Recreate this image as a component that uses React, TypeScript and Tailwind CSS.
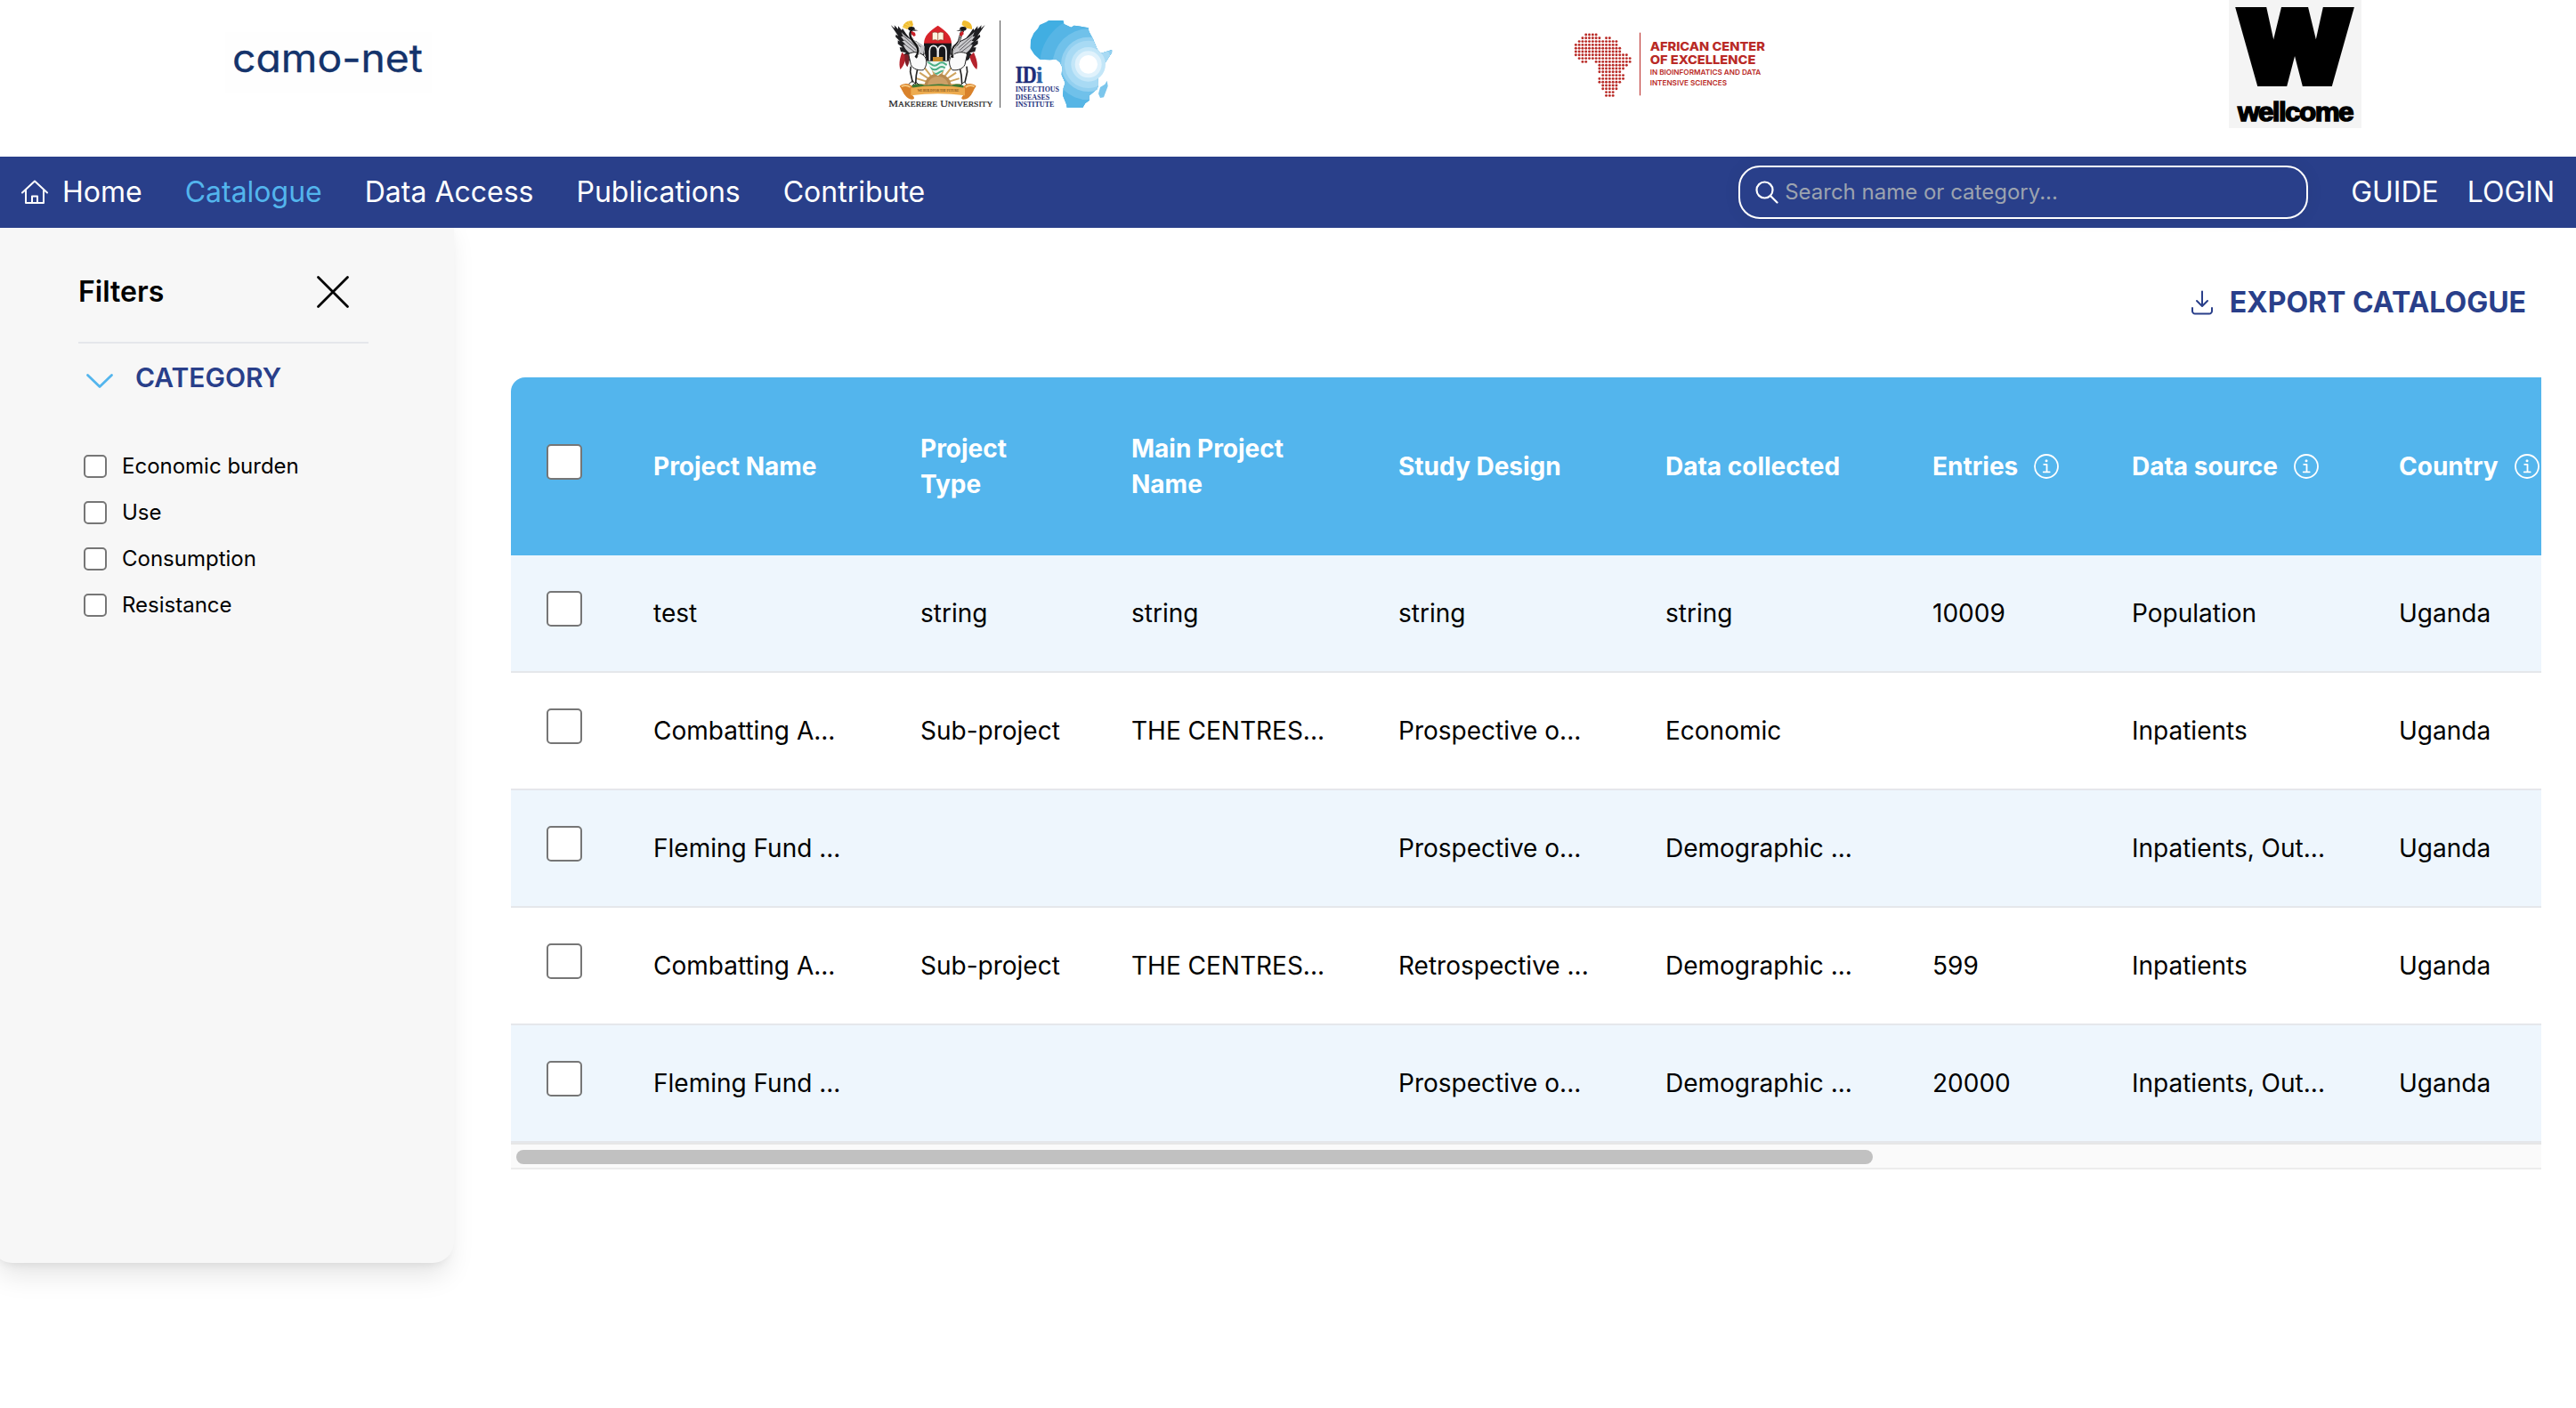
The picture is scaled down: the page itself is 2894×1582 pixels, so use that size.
import React from "react";

const FONT = "font-[Inter,'Liberation_Sans',sans-serif]";

/* ---------- logos ---------- */

function CamoNetLogo() {
  return (
    <svg className="mt-[36px] h-[68px] w-[232px] shrink-0" viewBox="0 0 232 68">
      <rect width="232" height="68" fill="#fefefe" />
      <text
        x="8"
        y="44.5"
        fontSize="43"
        fontWeight="400"
        fill="#14336b"
        stroke="#14336b"
        strokeWidth="0.3"
        textLength="214"
        lengthAdjust="spacingAndGlyphs"
        style={{ fontFamily: "Inter, sans-serif", fontFeatureSettings: '"cv11"' }}
      >
        camo-net
      </text>
    </svg>
  );
}

function Crane() {
  return (
    <g>
      <path d="M62 84l14 12-2-11 13 13 0-10 12 14 3-6 12 18 12 14 24 12 20 14 6 28-14 22-22 6-22-8-12-18 8-6-18-4-4-14 10 0-16-12 0-12 8 4-16-16 2-8 8 6z" fill="#1f1f22" />
      <path d="M98 108c14 16 34 30 54 34l24 14-4 26-24 6c-22-4-38-20-44-38l10 2-14-14 8 0-12-16 8 2z" fill="#c9c9cc" />
      <path d="M104 120l48 42M108 134l40 36M112 152l34 26M120 124l44 34" stroke="#5a5a5e" strokeWidth="3" fill="none" />
      <path d="M100 176c-6 16-12 36-6 58 10-8 18-28 20-44z" fill="#b5222c" />
      <path d="M110 182c-2 20 0 34 8 44 8-16 8-30 4-42z" fill="#7c1f28" />
      <path d="M122 182c16-10 40-8 56 10 8 16 4 34-6 44-16 2-34-2-42-18z" fill="#fafafa" stroke="#222" strokeWidth="3" />
      <path d="M134 102c-16 18 4 34 16 52 8 14 6 28-4 40" stroke="#161616" strokeWidth="9" fill="none" />
      <path d="M136 104c-12 20 8 32 19 50 6 14 5 24-2 36" stroke="#f5f5f5" strokeWidth="3" fill="none" />
      <path d="M102 92c4-14 14-22 32-22l4 14-8 12-14 2z" fill="#f0bc31" />
      <path d="M104 90l26 4M110 80l22 12M120 73l12 18" stroke="#fbe07a" strokeWidth="2" />
      <ellipse cx="132" cy="97" rx="11" ry="7" fill="#17171a" />
      <path d="M138 98l17 5-16 2z" fill="#444" />
      <path d="M130 104l14 6 2 9-6 4-8-8z" fill="#c92027" />
      <path d="M130 224l-2 18 8 36M152 234l-4 20-2 28" stroke="#252525" strokeWidth="5" fill="none" />
      <path d="M122 284l14-12 10 12M136 288l11-12 10 10" stroke="#252525" strokeWidth="3" fill="none" />
    </g>
  );
}

const RAYS = [180, 198, 216, 234, 252, 270, 288, 306, 324, 342, 360];

function MakerereIdiLogo() {
  return (
    <svg className="h-[140px] w-[290px] shrink-0" viewBox="0 0 870 420">
      <defs>
        <clipPath id="logo-frame">
          <rect x="45" y="69" width="770" height="294" />
        </clipPath>
        <clipPath id="africa">
          <path d="M564 84l22-10 8-5h50l2 12 24 11 10-6 14 2 34 6 2 12 14 26 14 34 12 14 38-12 0 8-22 34-20 24-6 22 2 30-4 14-26 22 0 16-14 10-12 20-14 12-26 2-8-8-4-22-12-30 2-24 6-18-12-28 2-26-8-16-12-10-22 2-34-2-18-16-14-22 2-28 10-22 14-16z" />
        </clipPath>
        <clipPath id="shield">
          <path d="M174 148c0-28 20-44 47-62 26 18 46 34 46 62 0 50-20 90-46 108-27-18-47-58-47-108z" />
        </clipPath>
      </defs>
      <g clipPath="url(#logo-frame)">
        <g stroke="#cfa45f" strokeWidth="6">
          {RAYS.map((a) => {
            const r = (a * Math.PI) / 180;
            return (
              <line
                key={a}
                x1={221}
                y1={286}
                x2={221 + Math.cos(r) * 76}
                y2={286 + Math.sin(r) * 70}
              />
            );
          })}
        </g>
        <path d="M176 290a45 42 0 0 1 90 0z" fill="#b8894e" />
        <path d="M186 290a35 32 0 0 1 70 0z" fill="#cda067" />
        <path d="M128 292c16-14 36-10 50-4 30-6 60-6 88 0 14-6 34-8 48 6l-8 14H136z" fill="#3c7a35" />
        <g clipPath="url(#shield)">
          <rect x="170" y="80" width="102" height="68" fill="#d8232a" />
          <rect x="170" y="146" width="102" height="62" fill="#17171a" />
          <rect x="170" y="206" width="102" height="56" fill="#e9f6ef" />
          <path d="M174 216q12-10 24 0t24 0 24 0 24 0M174 230q12-10 24 0t24 0 24 0 24 0M178 244q12-10 24 0t24 0 24 0" stroke="#49ad83" strokeWidth="6" fill="none" />
        </g>
        <path d="M193 204v-32c0-24 26-24 27 0v24M222 196v-24c1-24 27-24 27 0v32" stroke="#f2f2f2" strokeWidth="5" fill="none" />
        <path d="M204 192h34v15h-34z" fill="#c98a2b" />
        <path d="M202 110c8-3 15-2 19 2 4-4 11-5 19-2v26c-8-3-15-2-19 2-4-4-11-5-19-2z" fill="#fdf4df" stroke="#8f3a22" strokeWidth="2" />
        <path d="M221 112v26" stroke="#8f3a22" strokeWidth="2" />
        <Crane />
        <g transform="translate(442 0) scale(-1 1)">
          <path d="M62 84l14 12-2-11 13 13 0-10 12 14 3-6 12 18 12 14 24 12 20 14 6 28-14 22-22 6-22-8-12-18 8-6-18-4-4-14 10 0-16-12 0-12 8 4-16-16 2-8 8 6z" fill="#1f1f22" />
          <path d="M98 108c14 16 34 30 54 34l24 14-4 26-24 6c-22-4-38-20-44-38l10 2-14-14 8 0-12-16 8 2z" fill="#c9c9cc" />
          <path d="M104 120l48 42M108 134l40 36M112 152l34 26" stroke="#5a5a5e" strokeWidth="3" fill="none" />
          <path d="M100 176c-6 16-16 36-10 58 12-8 20-28 24-44z" fill="#b5222c" />
          <path d="M122 182c16-10 40-8 56 10 8 16 4 34-6 44-16 2-34-2-42-18z" fill="#fafafa" stroke="#222" strokeWidth="3" />
        </g>
        <g transform="translate(172 0)">
          <path d="M134 102c-16 18-4 30-20 46-16 12-20 30-14 46" stroke="#161616" strokeWidth="9" fill="none" />
          <path d="M132 104c-12 18-4 30-18 46-14 12-16 28-10 44" stroke="#f5f5f5" strokeWidth="3" fill="none" />
          <path d="M130 84c0-8 2-12 6-15 18 2 30 12 28 30l-18-4z" fill="#f0bc31" />
          <ellipse cx="134" cy="97" rx="11" ry="7" fill="#17171a" />
          <path d="M128 98l-17 6 16 1z" fill="#444" />
          <path d="M134 104l-10 6-2 8 6 5 8-8z" fill="#c92027" />
          <path d="M146 224l2 18-8 36M124 234l4 20 2 28" stroke="#252525" strokeWidth="5" fill="none" />
          <path d="M124 288l14-12 10 10" stroke="#252525" strokeWidth="3" fill="none" />
        </g>
        <path d="M92 290c12-10 34-12 44 4l-2 26c12 10 8 18-8 14-20-8-24-32-34-44z" fill="#d9822b" />
        <path d="M350 290c-12-10-34-12-44 4l2 26c-12 10-8 18 8 14 20-8 24-32 34-44z" fill="#d9822b" />
        <path d="M130 296q91-14 182 0v26q-91-12-182 0z" fill="#edab4f" />
        <path d="M98 292q16-8 30 2M344 292q-16-8-30 2" stroke="#f7cb83" strokeWidth="5" fill="none" />
        <text x="152" y="310" fontSize="11" textLength="140" fontWeight="700" fill="#8a5a1c" fontFamily="'Liberation Serif', serif">
          WE BUILD FOR THE FUTURE
        </text>
        <text x="55" y="361" fontSize="29" fill="#1f1f1f" stroke="#1f1f1f" strokeWidth="0.6" fontFamily="'Liberation Serif', serif" textLength="351" lengthAdjust="spacingAndGlyphs">
          M<tspan fontSize="23">AKERERE</tspan> U<tspan fontSize="23">NIVERSITY</tspan>
        </text>
        <rect x="429" y="69" width="3" height="294" fill="#555" />
        <g clipPath="url(#africa)">
          <rect x="500" y="60" width="320" height="320" fill="#41aee2" />
          <circle cx="728" cy="217" r="163" fill="#56b5e5" />
          <circle cx="728" cy="217" r="120" fill="#70c1ea" />
          <circle cx="728" cy="217" r="92" fill="#93d0f0" />
          <circle cx="728" cy="217" r="80" fill="#a8daf4" />
        </g>
        <circle cx="728" cy="217" r="58" fill="#c3e6f8" />
        <circle cx="728" cy="217" r="45" fill="#e0f2fc" />
        <circle cx="728" cy="217" r="31" fill="#ffffff" />
        <path d="M791 272l3 18-14 38-12 2-6-14 6-22 16-10z" fill="#7cc6ec" />
        <text x="482" y="279" fontSize="82" fontWeight="700" fill="#1c2b78" stroke="#1c2b78" strokeWidth="1.5" fontFamily="'Liberation Serif', serif" textLength="72" lengthAdjust="spacingAndGlyphs">
          ID
        </text>
        <text x="553" y="279" fontSize="76" fontWeight="700" fill="#2b5fa5" stroke="#2b5fa5" strokeWidth="1.5" fontFamily="'Liberation Serif', serif">
          i
        </text>
        <g fontSize="23" fontWeight="700" fill="#23307e" fontFamily="'Liberation Serif', serif">
          <text x="482" y="310" textLength="148" lengthAdjust="spacingAndGlyphs">INFECTIOUS</text>
          <text x="482" y="335" textLength="116" lengthAdjust="spacingAndGlyphs">DISEASES</text>
          <text x="482" y="361" textLength="131" lengthAdjust="spacingAndGlyphs">INSTITUTE</text>
        </g>
      </g>
    </svg>
  );
}

/* Dot runs of the dotted map: [row, first column, last column] */
const DOT_RUNS: [number, number, number][] = [
  [0, 3, 6], [1, 2, 7], [1, 9, 10], [2, 1, 12], [3, 0, 12], [4, 0, 13], [5, 0, 13],
  [6, 0, 15], [7, 1, 16], [8, 2, 3], [8, 6, 16], [9, 7, 15], [10, 7, 14], [11, 7, 13],
  [12, 8, 14], [13, 7, 14], [14, 7, 13], [15, 8, 12], [16, 8, 12], [17, 9, 11], [18, 9, 11],
];

function AceLogo() {
  return (
    <svg className="mt-[20px] h-[110px] w-[270px] shrink-0" viewBox="0 0 810 330">
      <g fill="#b92a26">
        {DOT_RUNS.flatMap(([row, a, b]) =>
          Array.from({ length: b - a + 1 }, (_, i) => (
            <circle key={`${row}-${a + i}`} cx={91 + (a + i) * 11.4} cy={57 + row * 11.4} r="4.4" />
          )),
        )}
        <rect x="306" y="50" width="3" height="212" />
        <g fontFamily="Inter, sans-serif">
          <text x="341" y="110" fontSize="41" fontWeight="800" textLength="388" lengthAdjust="spacingAndGlyphs">AFRICAN CENTER</text>
          <text x="341" y="156" fontSize="41" fontWeight="800" textLength="356" lengthAdjust="spacingAndGlyphs">OF EXCELLENCE</text>
          <text x="341" y="192" fontSize="24" fontWeight="600" textLength="374" lengthAdjust="spacingAndGlyphs">IN BIOINFORMATICS AND DATA</text>
          <text x="341" y="229" fontSize="24" fontWeight="600" textLength="259" lengthAdjust="spacingAndGlyphs">INTENSIVE SCIENCES</text>
        </g>
      </g>
    </svg>
  );
}

function WellcomeLogo() {
  return (
    <svg className="h-[144px] w-[149px] shrink-0" viewBox="0 0 149 144">
      <rect width="149" height="144" fill="#f4f4f4" />
      <text
        x="10"
        y="93"
        fontSize="112"
        fontWeight="900"
        stroke="#000"
        strokeWidth="8"
        textLength="128"
        lengthAdjust="spacingAndGlyphs"
        fontFamily="Inter, sans-serif"
      >
        W
      </text>
      <text
        x="10"
        y="136"
        fontSize="29"
        fontWeight="700"
        stroke="#000"
        strokeWidth="1.4"
        textLength="129"
        lengthAdjust="spacingAndGlyphs"
        fontFamily="'Liberation Sans', sans-serif"
        letterSpacing="-1.5"
      >
        wellcome
      </text>
    </svg>
  );
}

/* ---------- icons ---------- */

function HomeIcon() {
  return (
    <svg className="h-[30px] w-[32px]" viewBox="0 0 32 30" fill="none" stroke="currentColor" strokeWidth="2" strokeLinejoin="round" strokeLinecap="round">
      <path d="M2 15.500L16 2.500l14 13M6 12.500V27h20V12.500M13 27v-7.500h6V27" />
    </svg>
  );
}

function SearchIcon() {
  return (
    <svg className="h-[26px] w-[26px]" viewBox="0 0 26 26" fill="none" stroke="#fff" strokeWidth="2.200" strokeLinecap="round">
      <circle cx="10.500" cy="10.500" r="9" />
      <path d="M17 17l7.500 7.500" />
    </svg>
  );
}

function DownloadIcon() {
  return (
    <svg className="h-[28px] w-[26px]" viewBox="0 0 26 28" fill="none" stroke="currentColor" strokeWidth="2" strokeLinecap="round" strokeLinejoin="round">
      <path d="M13 1.500v16M7 12l6 6 6-6M2 20v3.500a3 3 0 0 0 3 3h16a3 3 0 0 0 3-3V20" />
    </svg>
  );
}

function InfoIcon() {
  return (
    <svg className="h-[28px] w-[28px] shrink-0" viewBox="0 0 28 28" fill="none" stroke="currentColor" strokeWidth="1.800">
      <circle cx="14" cy="14" r="13" />
      <path d="M11.200 11.800h3.300v8.400M10.700 20.300h7" strokeLinecap="round" strokeLinejoin="round" />
      <circle cx="14" cy="7.700" r="1.500" fill="currentColor" stroke="none" />
    </svg>
  );
}

/* ---------- data ---------- */

const NAV = ["Catalogue", "Data Access", "Publications", "Contribute"];
const CATEGORIES = ["Economic burden", "Use", "Consumption", "Resistance"];

const COLUMNS: { label: string; info?: boolean }[] = [
  { label: "Project Name" },
  { label: "Project Type" },
  { label: "Main Project Name" },
  { label: "Study Design" },
  { label: "Data collected" },
  { label: "Entries", info: true },
  { label: "Data source", info: true },
  { label: "Country", info: true },
];

const ROWS = [
  ["test", "string", "string", "string", "string", "10009", "Population", "Uganda"],
  ["Combatting A...", "Sub-project", "THE CENTRES...", "Prospective o...", "Economic", "", "Inpatients", "Uganda"],
  ["Fleming Fund ...", "", "", "Prospective o...", "Demographic ...", "", "Inpatients, Out...", "Uganda"],
  ["Combatting A...", "Sub-project", "THE CENTRES...", "Retrospective ...", "Demographic ...", "599", "Inpatients", "Uganda"],
  ["Fleming Fund ...", "", "", "Prospective o...", "Demographic ...", "20000", "Inpatients, Out...", "Uganda"],
];

const GRID = "grid w-[2321px] grid-cols-[120px_300px_237px_300px_300px_300px_224px_300px_240px] items-center";

/* ---------- page ---------- */

function TableCheckbox() {
  return (
    <div className="pl-10">
      <input type="checkbox" className="mb-[10px] block size-10 appearance-none rounded-[5px] border-2 border-[#767676] bg-white" />
    </div>
  );
}

export default function App() {
  return (
    <div className={`${FONT} h-[1582px] w-[2894px] overflow-hidden bg-white text-black`}>
      <header className="flex h-[176px] items-start pl-[253px]">
        <CamoNetLogo />
        <div className="ml-[495px]">
          <MakerereIdiLogo />
        </div>
        <div className="ml-[470px]">
          <AceLogo />
        </div>
        <div className="ml-[494px]">
          <WellcomeLogo />
        </div>
      </header>

      <nav className="relative z-10 flex h-20 items-center bg-[#293f8a] pr-[24px] pl-[23px] text-[32px] text-white">
        <a className="flex items-center gap-[15px]">
          <HomeIcon />
          Home
        </a>
        {NAV.map((item) => (
          <a key={item} className={item === "Catalogue" ? "ml-12 text-[#53b5ed]" : "ml-12"}>
            {item}
          </a>
        ))}
        <div className="ml-auto flex h-[60px] w-[640px] items-center gap-[7px] rounded-[24px] border-2 border-white pl-[17px] shadow-[0_0_20px_rgba(0,0,0,0.06)]">
          <SearchIcon />
          <input
            placeholder="Search name or category..."
            className="flex-1 bg-transparent text-[24px] text-white outline-none placeholder:text-[#9ca3af]"
          />
        </div>
        <a className="ml-12">GUIDE</a>
        <a className="ml-8">LOGIN</a>
      </nav>

      <div className="flex items-start">
        <aside className="-mt-6 -ml-[10px] h-[1187px] w-[520px] shrink-0 rounded-[24px] bg-[#f7f7f7] pt-[24px] pl-[98px] shadow-[0_20px_30px_-6px_rgba(0,0,0,0.1),0_8px_12px_-8px_rgba(0,0,0,0.1)]">
          <div className="flex h-[130px] w-[326px] items-center justify-between border-b-2 border-[#e5e7eb] pt-[15px] pr-[21px]">
            <h2 className="text-[32px] font-semibold">Filters</h2>
            <svg className="h-[38px] w-[38px]" viewBox="0 0 38 38" stroke="#000" strokeWidth="2.800" strokeLinecap="round">
              <path d="M2.500 2.500l33 33M35.500 2.500l-33 33" />
            </svg>
          </div>
          <div className="mt-[13px] flex h-[50px] items-center text-[30px] font-semibold text-[#293f8a]">
            <svg className="mt-[8px] ml-[8px] h-[18px] w-[32px]" viewBox="0 0 32 18" fill="none" stroke="#53b5ed" strokeWidth="2.800" strokeLinecap="round" strokeLinejoin="round">
              <path d="M2.500 2.500l13.500 13 13.500-13" />
            </svg>
            <span className="ml-[24px]">CATEGORY</span>
          </div>
          <ul className="mt-[49px]">
            {CATEGORIES.map((c) => (
              <li key={c} className="flex h-[52px] items-center pl-[6px] text-[24px]">
                <input type="checkbox" className="size-[26px] appearance-none rounded-[5px] border-2 border-[#767676] bg-white" />
                <span className="-mt-px ml-[17px]">{c}</span>
              </li>
            ))}
          </ul>
        </aside>

        <main className="ml-16 w-[2281px] pt-[64px]">
          <div className="flex h-[40px] items-center justify-end gap-[18px] pr-[17px] text-[32px] font-bold text-[#293f8a]">
            <DownloadIcon />
            EXPORT CATALOGUE
          </div>

          <div className="mt-[64px] overflow-hidden rounded-tl-[16px] text-[28px]">
            <div className={`${GRID} h-[200px] bg-[#53b5ed] leading-10 font-bold text-white`}>
              <TableCheckbox />
              {COLUMNS.map((c) => (
                <div key={c.label} className="flex items-center gap-[18px] px-10 last:pr-0">
                  {c.label}
                  {c.info && <InfoIcon />}
                </div>
              ))}
            </div>
            {ROWS.map((row, i) => (
              <div key={i} className={`${GRID} h-[132px] border-b-2 border-[#e5e7eb] ${i % 2 === 0 ? "bg-[#eef6fd]" : "bg-white"}`}>
                <TableCheckbox />
                {row.map((cell, j) => (
                  <div key={j} className="pl-10 whitespace-nowrap">
                    {cell}
                  </div>
                ))}
              </div>
            ))}
            <div className="h-[30px] border-t-2 border-b-2 border-t-[#e6e6e6] border-b-[#ececec] bg-[#fafafa] pt-[6px] pl-[6px]">
              <div className="h-4 w-[1524px] rounded-full bg-[#c1c1c1]" />
            </div>
          </div>
        </main>
      </div>
    </div>
  );
}
